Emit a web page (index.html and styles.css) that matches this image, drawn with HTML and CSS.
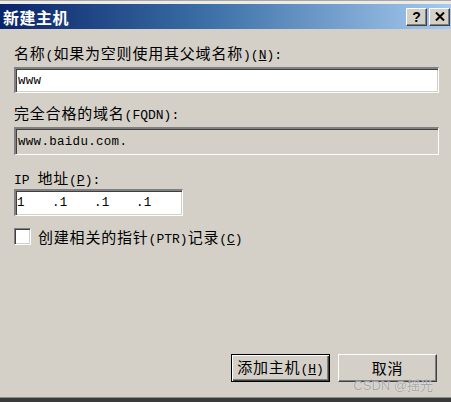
FILE: index.html
```html
<!DOCTYPE html>
<html>
<head>
<meta charset="utf-8">
<link rel="stylesheet" href="styles.css">
</head>
<body>
<div class="window">
  <div class="topstrip"></div>
  <div class="titlebar">
    <span class="title">新建主机</span>
    <div class="tbuttons">
      <span class="tbtn help">?</span>
      <span class="tbtn close">
        <svg width="10" height="9" viewBox="0 0 10 9"><path d="M1 0.5 L9 8.5 M9 0.5 L1 8.5" stroke="#000" stroke-width="2"/></svg>
      </span>
    </div>
  </div>
  <div class="content">
    <div class="label l1">名称<span class="h">(</span>如果为空则使用其父域名称<span class="h">)(<u>N</u>):</span></div>
    <div class="field f1"><span class="mono">www</span></div>
    <div class="label l2">完全合格的域名<span class="h">(FQDN):</span></div>
    <div class="field f2 disabled"><span class="mono">www.baidu.com.</span></div>
    <div class="label l3"><span class="h">IP </span>地址<span class="h">(<u>P</u>):</span></div>
    <div class="field f3">
      <span class="seg first mono">1</span>
      <span class="seg mono">.1</span>
      <span class="seg mono">.1</span>
      <span class="seg mono">.1</span>
    </div>
    <div class="checkrow">
      <span class="checkbox"></span>
      <span class="checklabel">创建相关的指针<span class="h">(PTR)</span>记录<span class="h">(<u>C</u>)</span></span>
    </div>
    <div class="buttons">
      <div class="btn default"><span class="btninner">添加主机<span class="h">(<u>H</u>)</span></span></div>
      <div class="btn"><span class="btninner">取消</span></div>
      <span class="watermark">CSDN @摇光</span>
    </div>
  </div>
  <div class="bottombar"></div>
</div>
</body>
</html>
```
FILE: styles.css
```css
html, body {
  margin: 0;
  padding: 0;
  width: 451px;
  height: 402px;
  overflow: hidden;
  background: #d4d0c8;
}
.window {
  width: 451px;
  height: 402px;
  display: flex;
  flex-direction: column;
  font-family: "Noto Sans CJK SC", "Liberation Sans", sans-serif;
  color: #000;
}
.topstrip {
  height: 4px;
  background: #ecebe6;
  border-top: 1px solid #a8a8a8;
  box-sizing: border-box;
}
.titlebar {
  height: 25px;
  background: linear-gradient(to right, #0a246a 0%, #3a6ea5 45%, #a6caf0 100%);
  display: flex;
  align-items: center;
  justify-content: space-between;
  padding-left: 3px;
}
.title {
  color: #fff;
  font-weight: bold;
  font-size: 16px;
  letter-spacing: 0.5px;
  line-height: 20px;
}
.tbuttons {
  display: flex;
  gap: 2px;
  padding-right: 1px;
}
.tbtn {
  width: 21px;
  height: 18px;
  box-sizing: border-box;
  background: #d4d0c8;
  border-top: 1px solid #fff;
  border-left: 1px solid #fff;
  border-right: 1px solid #404040;
  border-bottom: 1px solid #404040;
  box-shadow: inset -1px -1px 0 #808080;
  display: flex;
  align-items: center;
  justify-content: center;
  font-family: "Liberation Sans", sans-serif;
  font-weight: bold;
  font-size: 14px;
  line-height: 14px;
}
.content {
  flex: 1;
  display: flex;
  flex-direction: column;
  padding: 16px 12px 15px 14px;
  position: relative;
}
.label, .checklabel, .btninner {
  font-size: 15px;
  letter-spacing: 0.8px;
  white-space: nowrap;
}
.label {
  line-height: 16px;
  height: 16px;
}
.h {
  font-family: "Liberation Mono", monospace;
  font-size: 13px;
  letter-spacing: 0;
  white-space: pre;
}
.l2 { margin-top: 12px; }
.l3 { margin-top: 15px; }
.field {
  box-sizing: border-box;
  background: #fff;
  border-top: 2px solid #808080;
  border-left: 2px solid #808080;
  border-right: 1px solid #fff;
  border-bottom: 1px solid #fff;
  box-shadow: inset 1px 1px 0 #404040, inset -1px -1px 0 #d4d0c8;
  display: flex;
  align-items: center;
  padding-left: 2px;
}
.mono {
  font-family: "Liberation Mono", monospace;
  font-size: 12.5px;
  letter-spacing: 0.3px;
}
.f1 { margin-top: 6px; height: 26px; width: 425px; }
.f2 { margin-top: 6px; height: 28px; width: 425px; }
.f2.disabled { background: #d4d0c8; }
.f3 { margin-top: 3px; height: 27px; width: 169px; padding-left: 1px; }
.seg { width: 42px; }
.seg.first { width: 35px; }
.checkrow {
  margin-top: 12px;
  display: flex;
  align-items: center;
  height: 17px;
}
.checkbox {
  width: 17px;
  height: 17px;
  box-sizing: border-box;
  background: #fff;
  border-top: 1px solid #808080;
  border-left: 1px solid #808080;
  border-right: 1px solid #fff;
  border-bottom: 1px solid #fff;
  box-shadow: inset 1px 1px 0 #404040, inset -1px -1px 0 #d4d0c8;
}
.checklabel {
  margin-left: 7px;
}
.buttons {
  margin-top: auto;
  display: flex;
  justify-content: flex-end;
  gap: 8px;
  padding-right: 2px;
  position: relative;
}
.btn {
  width: 99px;
  height: 28px;
  box-sizing: border-box;
  background: #d4d0c8;
  border-top: 1px solid #fff;
  border-left: 1px solid #fff;
  border-right: 1px solid #404040;
  border-bottom: 1px solid #404040;
  box-shadow: inset -1px -1px 0 #808080;
  display: flex;
  align-items: center;
  justify-content: center;
}
.btninner {
  line-height: 18px;
}
.btn.default {
  border: 1px solid #000;
  box-shadow: inset 1px 1px 0 #fff, inset -1px -1px 0 #404040, inset -2px -2px 0 #808080;
}
.watermark {
  position: absolute;
  right: 6px;
  bottom: -11px;
  font-family: "Liberation Sans", "Noto Sans CJK SC", sans-serif;
  font-size: 13px;
  color: rgba(150, 150, 150, 0.85);
  text-shadow: 0 0 1px #fff;
  line-height: 14px;
}
.bottombar {
  height: 5px;
  background: #3a3a3a;
  border-top: 1px solid #8a8a8a;
  box-sizing: border-box;
}
```
